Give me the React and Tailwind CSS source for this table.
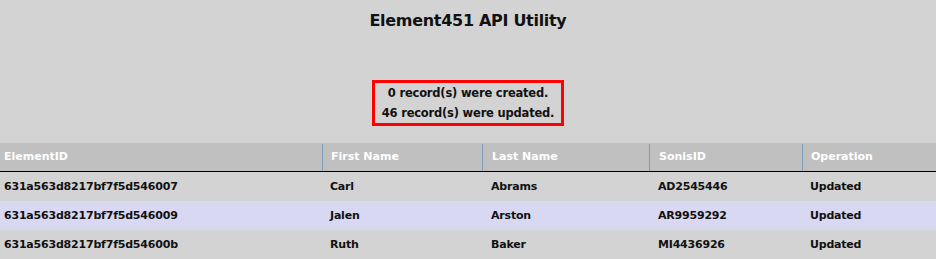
const ROWS = [
  { id: '631a563d8217bf7f5d546007', first: 'Carl', last: 'Abrams', sonis: 'AD2545446', op: 'Updated' },
  { id: '631a563d8217bf7f5d546009', first: 'Jalen', last: 'Arston', sonis: 'AR9959292', op: 'Updated' },
  { id: '631a563d8217bf7f5d54600b', first: 'Ruth', last: 'Baker', sonis: 'MI4436926', op: 'Updated' },
];

const COLS = 'grid grid-cols-[322px_160px_167px_153px_1fr]';

const App = () => {
  return (
    <div className="min-h-screen bg-[#d3d3d3] font-['DejaVu_Sans',sans-serif] font-bold text-[#111]">
      {/* Title */}
      <h1 className="pt-[10px] text-center text-[16px] leading-[22px] tracking-[-0.3px]">
        Element451 API Utility
      </h1>

      {/* Result summary */}
      <div className="mt-[48px] flex justify-center">
        <div className="border-[3px] border-[#ff0000] px-[7px] text-center text-[11.5px] leading-[20px] tracking-[-0.2px]">
          <div>0 record(s) were created.</div>
          <div>46 record(s) were updated.</div>
        </div>
      </div>

      {/* Records table */}
      <div className="mt-[17px]">
        <div className={`${COLS} h-[29px] border-b border-black bg-[#c0c0c0] pt-px text-[11px] text-white`}>
          <div className="flex items-center pl-1">ElementID</div>
          <div className="flex items-center border-l border-[#7f9db9] pl-2">First Name</div>
          <div className="flex items-center border-l border-[#7f9db9] pl-[9px]">Last Name</div>
          <div className="flex items-center border-l border-[#7f9db9] pl-[9px]">SonisID</div>
          <div className="flex items-center border-l border-[#7f9db9] pl-[8px]">Operation</div>
        </div>
        {ROWS.map((row, i) => (
          <div
            key={row.id}
            className={`${COLS} h-[29px] pt-[2px] text-[11px] tracking-[-0.2px] ${i % 2 === 1 ? 'bg-[#d8d8f2]' : 'bg-[#d3d3d3]'}`}
          >
            <div className="flex items-center pl-1">{row.id}</div>
            <div className="flex items-center pl-2">{row.first}</div>
            <div className="flex items-center pl-[9px]">{row.last}</div>
            <div className="flex items-center pl-[9px]">{row.sonis}</div>
            <div className="flex items-center pl-2">{row.op}</div>
          </div>
        ))}
      </div>
    </div>
  );
};

export default App;
